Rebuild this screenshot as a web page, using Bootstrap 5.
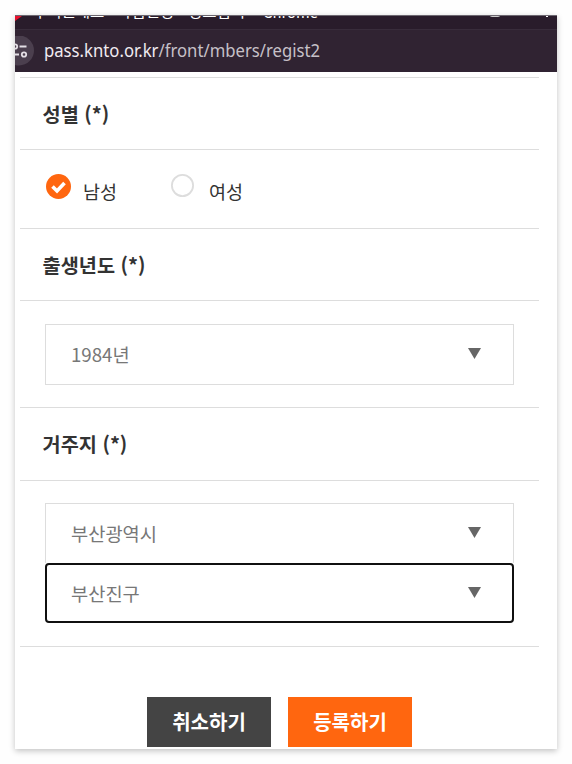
<!DOCTYPE html>
<html lang="ko">
<head>
<meta charset="utf-8">
<meta name="viewport" content="width=device-width, initial-scale=1">
<title>회원가입</title>
<link href="https://cdn.jsdelivr.net/npm/bootstrap@5.3.0/dist/css/bootstrap.min.css" rel="stylesheet">
<style>
body{background:#fefefe;font-family:"Noto Sans CJK KR",sans-serif;color:#333;height:764px;overflow:hidden;padding:15px}
.window{width:542px;height:734px;background:#fff;box-shadow:0 2px 6px rgba(0,0,0,.24)}
.titlebar{height:14px;background:#291c2b;border-top:1px solid #6c6770;color:#fff;font-size:15.500px;line-height:20px}
.titlebar .caption-part{position:absolute;top:-16px;white-space:nowrap}
.titlebar .latin{font-size:14.800px;top:-14px}
.tab-dot{position:absolute;left:0;top:0;width:7px;height:5px;background:#e8112d;clip-path:polygon(0 0,100% 0,0 100%)}
.win-max{position:absolute;left:474px;top:-10px;width:12px;height:11px;border:1.5px solid #ccc;border-radius:3px}
.win-close{position:absolute;left:531px;top:0;width:2px;height:1px;background:#fff}
.address{height:43px;background:#302332;border-top:1px solid #382c3b;font-family:"Noto Sans",sans-serif;font-size:18px;color:#c6c0c8}
.site-icon{width:19px;height:30px;flex:none}
.url{margin:-2px 0 0 10px;line-height:42px;white-space:nowrap;transform:scaleX(.927);transform-origin:0 50%}
.url b{font-weight:400;color:#f0ebf1}
.form-area{margin:5px 18px 0 5px;border-top:1px solid #ddd}
.heading{border-bottom:1px solid #ddd;padding-left:22.600px;font-size:19.700px;font-weight:700;height:72px;line-height:72px;margin:0}
.tall{height:73px}
.field{border-bottom:1px solid #ddd}
.gender{height:79px;padding-left:26px;font-size:18.500px}
.gender-mark{margin-top:24px}
.gender-name{margin:28px 0 0 12px;line-height:27px}
.second{margin-left:54px}
.second .gender-name{margin-left:14px}
.year{height:107px;padding:23px 0 0 25px}
.home{height:166px;padding:22px 0 0 25px}
.select-box{width:469px;height:61px;border:1px solid #ddd;padding:0 32px 0 25px;font-size:18.700px;color:#777}
.region{height:60px;border-bottom:0}
.focused{height:60px;border:2px solid #101010;border-radius:4px;padding:0 31px 0 24px}
.arrow{margin-top:-3px}
.focused .arrow{margin-top:-1px}
.actions{gap:17px;padding-top:50px}
.action{width:124px;height:50px;border:0;border-radius:0;padding:0;font-size:20px;font-weight:700;color:#fff;line-height:50px}
.cancel{background:#444}
.submit{background:#ff660f}
</style>
</head>
<body>
<main class="window">
<header>
<div class="titlebar position-relative overflow-hidden">
<span class="tab-dot"></span>
<span class="caption-part" style="left:18px">투어원패스</span>
<span class="caption-part" style="left:102px">가입신청</span>
<span class="caption-part" style="left:160px">-</span>
<span class="caption-part" style="left:173px">정보입력</span>
<span class="caption-part" style="left:236px">-</span>
<span class="caption-part latin" style="left:248px">Chrome</span>
<span class="win-max"></span><span class="win-close"></span>
</div>
<div class="address d-flex align-items-center">
<svg class="site-icon" viewBox="0 0 19 30"><circle cx="4" cy="14.500" r="15" fill="#4b3f4e"/><g fill="none" stroke="#e4dfe5" stroke-width="1.8"><circle cx="0" cy="10.500" r="2.200"/><path d="M4.500 10.500h7M-1 18.500h5"/><circle cx="9" cy="18.500" r="2.200"/></g></svg>
<span class="url"><b>pass.knto.or.kr</b>/front/mbers/regist2</span>
</div>
</header>
<form class="form-area">
<h2 class="heading">성별 (*)</h2>
<div class="field gender d-flex">
<label class="d-flex"><svg class="gender-mark" width="25" height="25"><circle cx="12.500" cy="12.500" r="12.500" fill="#ff660f"/><path d="M6.500 12.500l4.500 4.500 7.500-8" fill="none" stroke="#fff" stroke-width="3.600"/></svg><span class="gender-name">남성</span></label>
<label class="d-flex second"><svg class="gender-mark" width="24" height="24"><circle cx="11.500" cy="11.500" r="10.600" fill="#fff" stroke="#ddd" stroke-width="1.800"/></svg><span class="gender-name">여성</span></label>
</div>
<h2 class="heading">출생년도 (*)</h2>
<div class="field year"><div class="select-box d-flex align-items-center justify-content-between"><span>1984년</span><svg class="arrow" width="13" height="11"><path d="M0 0h13L6.500 11z" fill="#666"/></svg></div></div>
<h2 class="heading tall">거주지 (*)</h2>
<div class="field home">
<div class="select-box region d-flex align-items-center justify-content-between"><span>부산광역시</span><svg class="arrow" width="13" height="11"><path d="M0 0h13L6.500 11z" fill="#666"/></svg></div>
<div class="select-box focused d-flex align-items-center justify-content-between"><span>부산진구</span><svg class="arrow" width="13" height="11"><path d="M0 0h13L6.500 11z" fill="#666"/></svg></div>
</div>
<div class="actions d-flex justify-content-center"><button type="button" class="btn action cancel">취소하기</button><button type="button" class="btn action submit">등록하기</button></div>
</form>
</main>
<script src="https://cdn.jsdelivr.net/npm/bootstrap@5.3.0/dist/js/bootstrap.bundle.min.js"></script>
</body>
</html>
